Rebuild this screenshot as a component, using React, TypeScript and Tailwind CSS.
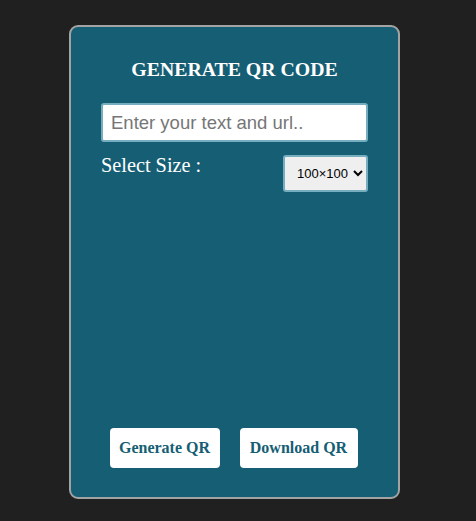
import { useState } from 'react'

const serif = { fontFamily: '"Liberation Serif", "Times New Roman", serif' }

export default function App() {
    const [text, setText] = useState('')
    const [size, setSize] = useState('100x100')

    return (
        <div className="min-h-[521px] w-full bg-[#202020] pt-[25px]">
            <div
                style={serif}
                className="ml-[69px] flex h-[474px] w-[331px] flex-col rounded-[9px] border-2 border-[#a3a3a3] bg-[#165e74] px-[30px]"
            >
                <h1 className="mt-[31px] text-center text-[19.8px] font-bold leading-[22px] text-white">
                    GENERATE QR CODE
                </h1>

                <input
                    value={text}
                    onChange={(e) => setText(e.target.value)}
                    placeholder="Enter your text and url.."
                    className="mt-[23px] h-[39px] w-[267px] rounded-[3px] border-2 border-[#76aec0] bg-white px-[8px] font-['Liberation_Sans',Arial,sans-serif] text-[18.5px] text-black outline-none placeholder:text-[#767676]"
                />

                <div className="mt-[11px] flex items-start justify-between">
                    <label className="text-[20.3px] leading-[24px] text-white">Select Size :</label>
                    <select
                        value={size}
                        onChange={(e) => setSize(e.target.value)}
                        className="mt-[2px] h-[37px] w-[85px] rounded-[3px] border-2 border-[#76aec0] bg-[#efefef] pl-[8px] font-['Liberation_Sans',Arial,sans-serif] text-[13px] text-black"
                    >
                        <option value="100x100">100×100</option>
                        <option value="150x150">150×150</option>
                        <option value="200x200">200×200</option>
                        <option value="250x250">250×250</option>
                        <option value="300x300">300×300</option>
                    </select>
                </div>

                <div className="mt-auto mb-[29px] flex justify-center gap-[20px] pr-[2px]">
                    <button className="h-[40px] w-[110px] rounded-[4px] bg-white text-[16px] font-bold text-[#165e74]">
                        Generate QR
                    </button>
                    <button className="h-[40px] w-[118px] rounded-[4px] bg-white text-[16px] font-bold text-[#165e74]">
                        Download QR
                    </button>
                </div>
            </div>
        </div>
    )
}
